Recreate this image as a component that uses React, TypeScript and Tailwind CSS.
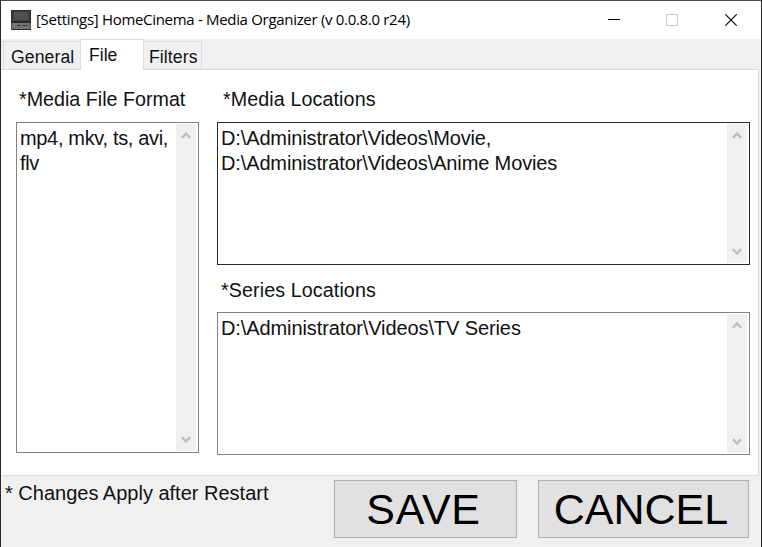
import React from "react";

function Chevron({ down = false }: { down?: boolean }) {
  return (
    <svg width="10" height="8" viewBox="0 0 10 8" className={down ? "rotate-180" : ""}>
      <path d="M0.9 6.8 L5 2.5 L9.1 6.8" fill="none" stroke="#bfbfbf" strokeWidth="2.4" />
    </svg>
  );
}

function TextBox({ lines, className }: { lines: string[]; className: string }) {
  return (
    <div className={`flex border bg-white py-px pr-[2px] pl-px ${className}`}>
      <div className="grow pt-[2px] pl-0.5 text-[20px] leading-[25px] whitespace-nowrap">
        {lines.map((line) => (
          <div key={line}>{line}</div>
        ))}
      </div>
      <div className="flex w-5 shrink-0 flex-col items-center justify-between bg-[#f0f0f0] py-[7px] pr-px">
        <Chevron />
        <Chevron down />
      </div>
    </div>
  );
}

function AppIcon() {
  return (
    <svg width="20" height="20" viewBox="0 0 20 20" className="shrink-0">
      <rect width="20" height="20" fill="#2b2b2b" />
      <rect x="1" y="1" width="18" height="10" fill="#3c3c3c" />
      <rect x="3" y="2" width="14" height="8" fill="#505050" />
      <rect x="0.5" y="13" width="19" height="6" fill="#757575" />
      <path d="M6 15.5H10M12 15.5H14M15 15.5H17" stroke="#2b2b2b" strokeWidth="1" />
    </svg>
  );
}

export default function App() {
  return (
    <div className="flex h-[547px] w-[762px] flex-col overflow-hidden border-x border-t border-x-[#2b292d] border-t-[#4c4a4e] bg-[#f0f0f0] font-['Liberation_Sans',Arial,sans-serif] text-[#101014]">
      <header className="flex h-[38px] shrink-0 items-center bg-white pl-[10px]">
        <AppIcon />
        <h1 className="ml-[5px] grow pb-px font-['Open_Sans',sans-serif] text-[15px] tracking-[-0.31px] whitespace-nowrap text-black">
          [Settings] HomeCinema - Media Organizer (v 0.0.8.0 r24)
        </h1>
        <svg width="12" height="12" viewBox="0 0 12 12" className="mr-[46px]">
          <path d="M0 5.5H12" stroke="#000" />
        </svg>
        <svg width="12" height="12" viewBox="0 0 12 12" className="mr-[47px]">
          <rect x="0.5" y="0.5" width="11" height="11" fill="none" stroke="#ccc" />
        </svg>
        <svg width="12" height="12" viewBox="0 0 12 12" className="mr-[24px]">
          <path d="M0.3 0.3L11.7 11.7M11.7 0.3L0.3 11.7" stroke="#000" strokeWidth="1.1" />
        </svg>
      </header>

      <nav className="flex h-[30px] shrink-0 items-end pl-[2px] text-[17.6px]">
        <div className="flex h-[28px] w-[77px] items-center border border-r-0 border-b-0 border-[#dcdcdc] pt-[4px] pl-[7px] tracking-[0.1px]">General</div>
        <div className="z-10 -mb-px flex h-[31px] w-[64px] border border-b-0 border-[#dcdcdc] bg-white pt-[5px] pl-[8px] leading-[21px]">File</div>
        <div className="flex h-[28px] w-[58px] items-center border border-b-0 border-l-0 border-[#dcdcdc] pt-[4px] pl-[5px] tracking-[0.1px]">Filters</div>
      </nav>

      <main className="mr-[2px] flex h-[407px] shrink-0 border-y border-r border-[#dcdcdc] bg-white pl-[15px] text-[20px]">
        <section className="w-[183px]">
          <h2 className="mt-[16px] ml-[3px] h-[36px] text-[19.7px] leading-[26px] whitespace-nowrap">*Media File Format</h2>
          <TextBox lines={["mp4, mkv, ts, avi,", "flv"]} className="h-[331px] border-[#828282] tracking-[-0.34px]" />
        </section>
        <section className="ml-[18px] w-[533px]">
          <h2 className="mt-[16px] ml-[6px] h-[36px] text-[19.7px] leading-[26px] tracking-[0.1px]">*Media Locations</h2>
          <TextBox
            lines={["D:\\Administrator\\Videos\\Movie,", "D:\\Administrator\\Videos\\Anime Movies"]}
            className="h-[143px] border-[#29292c] tracking-[-0.13px]"
          />
          <h2 className="mt-[12px] ml-[4px] h-[35px] text-[19.7px] leading-[26px] tracking-[0.1px]">*Series Locations</h2>
          <TextBox lines={["D:\\Administrator\\Videos\\TV Series"]} className="h-[143px] border-[#828282] tracking-[-0.1px]" />
        </section>
      </main>

      <footer className="flex grow items-start pt-[4px] pl-[4px]">
        <p className="mt-px w-[329px] text-[20px] leading-[25px] whitespace-nowrap">* Changes Apply after Restart</p>
        <button className="h-[58px] w-[183px] border border-[#b0b0b0] bg-[#e1e1e1] pr-[4px] text-[43px] leading-[55px] tracking-[0.7px] text-black">SAVE</button>
        <button className="ml-[21px] h-[58px] w-[211px] border border-[#b0b0b0] bg-[#e1e1e1] pr-[5px] text-[43px] leading-[55px] text-black">CANCEL</button>
      </footer>
    </div>
  );
}
